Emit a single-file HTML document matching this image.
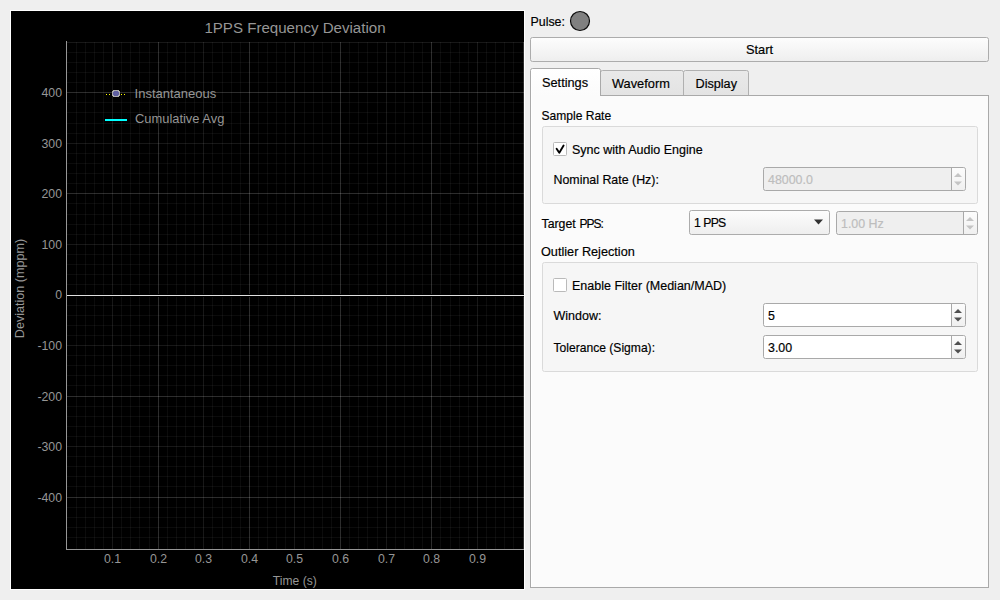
<!DOCTYPE html>
<html><head><meta charset="utf-8"><style>
html,body{margin:0;padding:0;width:1000px;height:600px;overflow:hidden;background:#efefef;}
svg{position:absolute;left:0;top:0;}
text{font-family:"Liberation Sans",sans-serif;}
.rp text{stroke:#000;stroke-width:0.18px;}
.rp text.dis{stroke:#bdbdbd;}
</style></head><body>
<svg width="1000" height="600" viewBox="0 0 1000 600" shape-rendering="crispEdges">
<defs>
<linearGradient id="gbtn" x1="0" y1="0" x2="0" y2="1"><stop offset="0" stop-color="#fdfdfd"/><stop offset="1" stop-color="#eeeeee"/></linearGradient>
<linearGradient id="gtab" x1="0" y1="0" x2="0" y2="1"><stop offset="0" stop-color="#e9e9e9"/><stop offset="1" stop-color="#e3e3e3"/></linearGradient>
<linearGradient id="gsp" x1="0" y1="0" x2="0" y2="1"><stop offset="0" stop-color="#fcfcfc"/><stop offset="1" stop-color="#f0f0f0"/></linearGradient>
<linearGradient id="gsel" x1="0" y1="0" x2="0" y2="1"><stop offset="0" stop-color="#ffffff"/><stop offset="1" stop-color="#fbfbfb"/></linearGradient>
</defs>

<rect x="10" y="10" width="515" height="580" fill="#ffffff"/>
<rect x="11" y="11" width="513" height="578" fill="#000000"/>
<rect x="76" y="42" width="1" height="507" fill="#ffffff" fill-opacity="0.047"/>
<rect x="85" y="42" width="1" height="507" fill="#ffffff" fill-opacity="0.047"/>
<rect x="94" y="42" width="1" height="507" fill="#ffffff" fill-opacity="0.047"/>
<rect x="103" y="42" width="1" height="507" fill="#ffffff" fill-opacity="0.047"/>
<rect x="121" y="42" width="1" height="507" fill="#ffffff" fill-opacity="0.047"/>
<rect x="130" y="42" width="1" height="507" fill="#ffffff" fill-opacity="0.047"/>
<rect x="139" y="42" width="1" height="507" fill="#ffffff" fill-opacity="0.047"/>
<rect x="149" y="42" width="1" height="507" fill="#ffffff" fill-opacity="0.047"/>
<rect x="167" y="42" width="1" height="507" fill="#ffffff" fill-opacity="0.047"/>
<rect x="176" y="42" width="1" height="507" fill="#ffffff" fill-opacity="0.047"/>
<rect x="185" y="42" width="1" height="507" fill="#ffffff" fill-opacity="0.047"/>
<rect x="194" y="42" width="1" height="507" fill="#ffffff" fill-opacity="0.047"/>
<rect x="212" y="42" width="1" height="507" fill="#ffffff" fill-opacity="0.047"/>
<rect x="222" y="42" width="1" height="507" fill="#ffffff" fill-opacity="0.047"/>
<rect x="231" y="42" width="1" height="507" fill="#ffffff" fill-opacity="0.047"/>
<rect x="240" y="42" width="1" height="507" fill="#ffffff" fill-opacity="0.047"/>
<rect x="258" y="42" width="1" height="507" fill="#ffffff" fill-opacity="0.047"/>
<rect x="267" y="42" width="1" height="507" fill="#ffffff" fill-opacity="0.047"/>
<rect x="276" y="42" width="1" height="507" fill="#ffffff" fill-opacity="0.047"/>
<rect x="285" y="42" width="1" height="507" fill="#ffffff" fill-opacity="0.047"/>
<rect x="304" y="42" width="1" height="507" fill="#ffffff" fill-opacity="0.047"/>
<rect x="313" y="42" width="1" height="507" fill="#ffffff" fill-opacity="0.047"/>
<rect x="322" y="42" width="1" height="507" fill="#ffffff" fill-opacity="0.047"/>
<rect x="331" y="42" width="1" height="507" fill="#ffffff" fill-opacity="0.047"/>
<rect x="349" y="42" width="1" height="507" fill="#ffffff" fill-opacity="0.047"/>
<rect x="358" y="42" width="1" height="507" fill="#ffffff" fill-opacity="0.047"/>
<rect x="367" y="42" width="1" height="507" fill="#ffffff" fill-opacity="0.047"/>
<rect x="377" y="42" width="1" height="507" fill="#ffffff" fill-opacity="0.047"/>
<rect x="395" y="42" width="1" height="507" fill="#ffffff" fill-opacity="0.047"/>
<rect x="404" y="42" width="1" height="507" fill="#ffffff" fill-opacity="0.047"/>
<rect x="413" y="42" width="1" height="507" fill="#ffffff" fill-opacity="0.047"/>
<rect x="422" y="42" width="1" height="507" fill="#ffffff" fill-opacity="0.047"/>
<rect x="440" y="42" width="1" height="507" fill="#ffffff" fill-opacity="0.047"/>
<rect x="450" y="42" width="1" height="507" fill="#ffffff" fill-opacity="0.047"/>
<rect x="459" y="42" width="1" height="507" fill="#ffffff" fill-opacity="0.047"/>
<rect x="468" y="42" width="1" height="507" fill="#ffffff" fill-opacity="0.047"/>
<rect x="486" y="42" width="1" height="507" fill="#ffffff" fill-opacity="0.047"/>
<rect x="495" y="42" width="1" height="507" fill="#ffffff" fill-opacity="0.047"/>
<rect x="504" y="42" width="1" height="507" fill="#ffffff" fill-opacity="0.047"/>
<rect x="513" y="42" width="1" height="507" fill="#ffffff" fill-opacity="0.047"/>
<rect x="67" y="537" width="457" height="1" fill="#ffffff" fill-opacity="0.047"/>
<rect x="67" y="527" width="457" height="1" fill="#ffffff" fill-opacity="0.047"/>
<rect x="67" y="517" width="457" height="1" fill="#ffffff" fill-opacity="0.047"/>
<rect x="67" y="507" width="457" height="1" fill="#ffffff" fill-opacity="0.047"/>
<rect x="67" y="486" width="457" height="1" fill="#ffffff" fill-opacity="0.047"/>
<rect x="67" y="476" width="457" height="1" fill="#ffffff" fill-opacity="0.047"/>
<rect x="67" y="466" width="457" height="1" fill="#ffffff" fill-opacity="0.047"/>
<rect x="67" y="456" width="457" height="1" fill="#ffffff" fill-opacity="0.047"/>
<rect x="67" y="436" width="457" height="1" fill="#ffffff" fill-opacity="0.047"/>
<rect x="67" y="426" width="457" height="1" fill="#ffffff" fill-opacity="0.047"/>
<rect x="67" y="416" width="457" height="1" fill="#ffffff" fill-opacity="0.047"/>
<rect x="67" y="406" width="457" height="1" fill="#ffffff" fill-opacity="0.047"/>
<rect x="67" y="385" width="457" height="1" fill="#ffffff" fill-opacity="0.047"/>
<rect x="67" y="375" width="457" height="1" fill="#ffffff" fill-opacity="0.047"/>
<rect x="67" y="365" width="457" height="1" fill="#ffffff" fill-opacity="0.047"/>
<rect x="67" y="355" width="457" height="1" fill="#ffffff" fill-opacity="0.047"/>
<rect x="67" y="335" width="457" height="1" fill="#ffffff" fill-opacity="0.047"/>
<rect x="67" y="325" width="457" height="1" fill="#ffffff" fill-opacity="0.047"/>
<rect x="67" y="315" width="457" height="1" fill="#ffffff" fill-opacity="0.047"/>
<rect x="67" y="305" width="457" height="1" fill="#ffffff" fill-opacity="0.047"/>
<rect x="67" y="284" width="457" height="1" fill="#ffffff" fill-opacity="0.047"/>
<rect x="67" y="274" width="457" height="1" fill="#ffffff" fill-opacity="0.047"/>
<rect x="67" y="264" width="457" height="1" fill="#ffffff" fill-opacity="0.047"/>
<rect x="67" y="254" width="457" height="1" fill="#ffffff" fill-opacity="0.047"/>
<rect x="67" y="234" width="457" height="1" fill="#ffffff" fill-opacity="0.047"/>
<rect x="67" y="224" width="457" height="1" fill="#ffffff" fill-opacity="0.047"/>
<rect x="67" y="214" width="457" height="1" fill="#ffffff" fill-opacity="0.047"/>
<rect x="67" y="203" width="457" height="1" fill="#ffffff" fill-opacity="0.047"/>
<rect x="67" y="183" width="457" height="1" fill="#ffffff" fill-opacity="0.047"/>
<rect x="67" y="173" width="457" height="1" fill="#ffffff" fill-opacity="0.047"/>
<rect x="67" y="163" width="457" height="1" fill="#ffffff" fill-opacity="0.047"/>
<rect x="67" y="153" width="457" height="1" fill="#ffffff" fill-opacity="0.047"/>
<rect x="67" y="133" width="457" height="1" fill="#ffffff" fill-opacity="0.047"/>
<rect x="67" y="123" width="457" height="1" fill="#ffffff" fill-opacity="0.047"/>
<rect x="67" y="112" width="457" height="1" fill="#ffffff" fill-opacity="0.047"/>
<rect x="67" y="102" width="457" height="1" fill="#ffffff" fill-opacity="0.047"/>
<rect x="67" y="82" width="457" height="1" fill="#ffffff" fill-opacity="0.047"/>
<rect x="67" y="72" width="457" height="1" fill="#ffffff" fill-opacity="0.047"/>
<rect x="67" y="62" width="457" height="1" fill="#ffffff" fill-opacity="0.047"/>
<rect x="67" y="52" width="457" height="1" fill="#ffffff" fill-opacity="0.047"/>
<rect x="112" y="42" width="1" height="507" fill="#ffffff" fill-opacity="0.095"/>
<rect x="203" y="42" width="1" height="507" fill="#ffffff" fill-opacity="0.095"/>
<rect x="294" y="42" width="1" height="507" fill="#ffffff" fill-opacity="0.095"/>
<rect x="386" y="42" width="1" height="507" fill="#ffffff" fill-opacity="0.095"/>
<rect x="477" y="42" width="1" height="507" fill="#ffffff" fill-opacity="0.095"/>
<rect x="67" y="446" width="457" height="1" fill="#ffffff" fill-opacity="0.095"/>
<rect x="67" y="345" width="457" height="1" fill="#ffffff" fill-opacity="0.095"/>
<rect x="67" y="244" width="457" height="1" fill="#ffffff" fill-opacity="0.095"/>
<rect x="67" y="143" width="457" height="1" fill="#ffffff" fill-opacity="0.095"/>
<rect x="67" y="42" width="457" height="1" fill="#ffffff" fill-opacity="0.095"/>
<rect x="158" y="42" width="1" height="507" fill="#ffffff" fill-opacity="0.175"/>
<rect x="249" y="42" width="1" height="507" fill="#ffffff" fill-opacity="0.175"/>
<rect x="340" y="42" width="1" height="507" fill="#ffffff" fill-opacity="0.175"/>
<rect x="431" y="42" width="1" height="507" fill="#ffffff" fill-opacity="0.175"/>
<rect x="523" y="42" width="1" height="507" fill="#ffffff" fill-opacity="0.175"/>
<rect x="67" y="497" width="457" height="1" fill="#ffffff" fill-opacity="0.175"/>
<rect x="67" y="396" width="457" height="1" fill="#ffffff" fill-opacity="0.175"/>
<rect x="67" y="294" width="457" height="1" fill="#ffffff" fill-opacity="0.175"/>
<rect x="67" y="193" width="457" height="1" fill="#ffffff" fill-opacity="0.175"/>
<rect x="67" y="92" width="457" height="1" fill="#ffffff" fill-opacity="0.175"/>
<rect x="67" y="294" width="457" height="3" fill="#000"/>
<rect x="67" y="295" width="457" height="1" fill="#e0e0e0"/>
<rect x="66" y="41" width="1" height="509" fill="#969696"/>
<rect x="66" y="549" width="458" height="1" fill="#969696"/>
<rect x="106" y="94" width="1" height="1" fill="#ffff00"/>
<rect x="109" y="94" width="1" height="1" fill="#ffff00"/>
<rect x="121" y="94" width="1" height="1" fill="#ffff00"/>
<rect x="124" y="94" width="1" height="1" fill="#ffff00"/>
<ellipse cx="116" cy="93.6" rx="3.6" ry="3.3" fill="#6060a2" stroke="#acacac" stroke-width="1" shape-rendering="crispEdges"/>
<rect x="105" y="119" width="22" height="2" fill="#00ffff"/>
<g fill="#969696" font-size="12.3">
<text x="295" y="33" font-size="15.1" text-anchor="middle">1PPS Frequency Deviation</text>
<text x="62" y="97" text-anchor="end">400</text>
<text x="62" y="148" text-anchor="end">300</text>
<text x="62" y="198" text-anchor="end">200</text>
<text x="62" y="249" text-anchor="end">100</text>
<text x="62" y="299" text-anchor="end">0</text>
<text x="62" y="350" text-anchor="end">-100</text>
<text x="62" y="401" text-anchor="end">-200</text>
<text x="62" y="451" text-anchor="end">-300</text>
<text x="62" y="502" text-anchor="end">-400</text>
<text x="112.5" y="563" text-anchor="middle">0.1</text>
<text x="158.5" y="563" text-anchor="middle">0.2</text>
<text x="203.5" y="563" text-anchor="middle">0.3</text>
<text x="249.5" y="563" text-anchor="middle">0.4</text>
<text x="294.5" y="563" text-anchor="middle">0.5</text>
<text x="340.5" y="563" text-anchor="middle">0.6</text>
<text x="386.5" y="563" text-anchor="middle">0.7</text>
<text x="431.5" y="563" text-anchor="middle">0.8</text>
<text x="477.5" y="563" text-anchor="middle">0.9</text>
<text x="294.8" y="585" text-anchor="middle" font-size="12.1">Time (s)</text>
<text transform="translate(24,288.5) rotate(-90)" x="0" y="0" text-anchor="middle" font-size="12.6">Deviation (mppm)</text>
<text x="134.6" y="98" font-size="13">Instantaneous</text>
<text x="135" y="123" font-size="12.9">Cumulative Avg</text>
</g>
<g class="rp">
<g font-size="12.4" fill="#000">
<text x="530.5" y="26">Pulse:</text>
</g>
<circle cx="580" cy="21" r="9.5" fill="#808080" stroke="#0c0c0c" stroke-width="1.2" shape-rendering="geometricPrecision"/>
<rect x="530.5" y="37.5" width="458" height="24" rx="2" fill="url(#gbtn)" stroke="#acacac" shape-rendering="geometricPrecision"/>
<text x="759.5" y="54" font-size="12.8" text-anchor="middle">Start</text>
<path d="M600.5 95.5 V72.5 Q600.5 70.5 602.5 70.5 H681.5 Q683.5 70.5 683.5 72.5 V95.5 Z" fill="url(#gtab)" stroke="#b0b0b0" shape-rendering="geometricPrecision"/>
<path d="M683.5 95.5 V72.5 Q683.5 70.5 685.5 70.5 H746.5 Q748.5 70.5 748.5 72.5 V95.5 Z" fill="url(#gtab)" stroke="#b0b0b0" shape-rendering="geometricPrecision"/>
<rect x="530.5" y="95.5" width="458" height="492" fill="#fbfbfb" stroke="#a9a9a9" shape-rendering="geometricPrecision"/>
<rect x="531" y="96" width="1" height="491" fill="#ffffff"/>
<path d="M530.5 96 V70.5 Q530.5 68.5 532.5 68.5 H598.5 Q600.5 68.5 600.5 70.5 V96" fill="url(#gsel)" stroke="#a9a9a9" shape-rendering="geometricPrecision"/>
<rect x="531" y="95" width="69" height="2" fill="#fbfbfb"/>
<rect x="531" y="70" width="1" height="27" fill="#ffffff"/>
<g font-size="12.4" fill="#000">
<text x="542" y="87" font-size="12.75">Settings</text>
<text x="612" y="88" font-size="12.8">Waveform</text>
<text x="695.5" y="88" font-size="12.65">Display</text>
<text x="541.5" y="120" font-size="12.05">Sample Rate</text>
</g>
<rect x="542.5" y="126.5" width="435" height="77" rx="2" fill="#f6f6f6" stroke="#dadada" shape-rendering="geometricPrecision"/>
<rect x="553.5" y="142.5" width="13" height="13" rx="1" fill="#ffffff" stroke="#bababa" shape-rendering="geometricPrecision"/>
<path d="M556.6 148.8 L559.3 152.8 L563.6 145.6" fill="none" stroke="#000" stroke-width="1.9" stroke-linecap="round" stroke-linejoin="round" shape-rendering="geometricPrecision"/>
<rect x="542.5" y="262.5" width="435" height="109" rx="2" fill="#f6f6f6" stroke="#dadada" shape-rendering="geometricPrecision"/>
<rect x="553.5" y="278.5" width="13" height="13" rx="1" fill="#ffffff" stroke="#bababa" shape-rendering="geometricPrecision"/>
<g font-size="12.4" fill="#000">
<text x="572" y="154" font-size="12.5">Sync with Audio Engine</text>
<text x="553.5" y="184">Nominal Rate (Hz):</text>
<text x="541.5" y="228" font-size="12.3">Target</text><text x="579.6" y="228" font-size="12" letter-spacing="-1">PPS:</text>
<text x="541" y="256" font-size="12.7">Outlier Rejection</text>
<text x="572" y="290" font-size="12.5">Enable Filter (Median/MAD)</text>
<text x="553.5" y="320" font-size="12.5">Window:</text>
<text x="553.5" y="352" font-size="12.1">Tolerance (Sigma):</text>
</g>
<rect x="763.5" y="167.5" width="202" height="23" rx="2" fill="#efefef" stroke="#a9a9a9" shape-rendering="geometricPrecision"/>
<path d="M951.5 168 H963 Q965 168 965 170 V188 Q965 190 963 190 H951.5 Z" fill="url(#gsp)" shape-rendering="geometricPrecision"/>
<rect x="951" y="168" width="1" height="22" fill="#a9a9a9"/>
<path d="M954 177.0 L958 173.0 L962 177.0 Z" fill="#c4c4c4" shape-rendering="geometricPrecision"/>
<path d="M954 181.5 L958 185.5 L962 181.5 Z" fill="#c4c4c4" shape-rendering="geometricPrecision"/>
<text x="768" y="184" font-size="12.4" fill="#bdbdbd" class="dis">48000.0</text>
<rect x="689.5" y="210.5" width="140" height="24" rx="2" fill="url(#gbtn)" stroke="#acacac" shape-rendering="geometricPrecision"/>
<text x="694" y="227" font-size="12.3">1</text><text x="703.3" y="227" font-size="12.2" letter-spacing="-0.75">PPS</text>
<path d="M814 219.5 L823 219.5 L818.5 224.5 Z" fill="#333" shape-rendering="geometricPrecision"/>
<rect x="836.5" y="211.5" width="141" height="23" rx="2" fill="#efefef" stroke="#a9a9a9" shape-rendering="geometricPrecision"/>
<path d="M963.5 212 H975 Q977 212 977 214 V232 Q977 234 975 234 H963.5 Z" fill="url(#gsp)" shape-rendering="geometricPrecision"/>
<rect x="963" y="212" width="1" height="22" fill="#a9a9a9"/>
<path d="M966 221.0 L970 217.0 L974 221.0 Z" fill="#c4c4c4" shape-rendering="geometricPrecision"/>
<path d="M966 225.5 L970 229.5 L974 225.5 Z" fill="#c4c4c4" shape-rendering="geometricPrecision"/>
<text x="841" y="228" font-size="12.4" fill="#bdbdbd" class="dis">1.00 Hz</text>
<rect x="763.5" y="303.5" width="202" height="23" rx="2" fill="#ffffff" stroke="#a9a9a9" shape-rendering="geometricPrecision"/>
<path d="M951.5 304 H963 Q965 304 965 306 V324 Q965 326 963 326 H951.5 Z" fill="url(#gsp)" shape-rendering="geometricPrecision"/>
<rect x="951" y="304" width="1" height="22" fill="#a9a9a9"/>
<path d="M954 313.0 L958 309.0 L962 313.0 Z" fill="#505050" shape-rendering="geometricPrecision"/>
<path d="M954 317.5 L958 321.5 L962 317.5 Z" fill="#505050" shape-rendering="geometricPrecision"/>
<text x="768" y="320" font-size="12.4" fill="#000">5</text>
<rect x="763.5" y="335.5" width="202" height="23" rx="2" fill="#ffffff" stroke="#a9a9a9" shape-rendering="geometricPrecision"/>
<path d="M951.5 336 H963 Q965 336 965 338 V356 Q965 358 963 358 H951.5 Z" fill="url(#gsp)" shape-rendering="geometricPrecision"/>
<rect x="951" y="336" width="1" height="22" fill="#a9a9a9"/>
<path d="M954 345.0 L958 341.0 L962 345.0 Z" fill="#505050" shape-rendering="geometricPrecision"/>
<path d="M954 349.5 L958 353.5 L962 349.5 Z" fill="#505050" shape-rendering="geometricPrecision"/>
<text x="768" y="352" font-size="12.4" fill="#000">3.00</text>
</g>
</svg>
</body></html>
